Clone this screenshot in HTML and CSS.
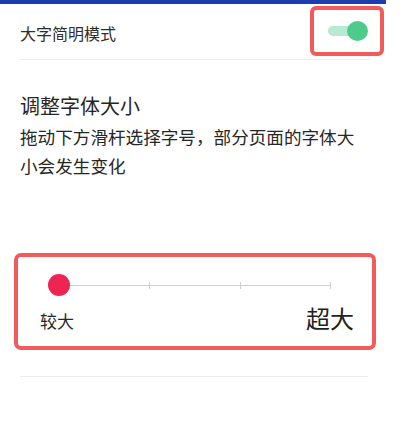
FILE: index.html
```html
<!DOCTYPE html>
<html lang="zh">
<head>
<meta charset="utf-8">
<link rel="stylesheet" href="styles.css">
</head>
<body>
<div class="topbar"></div>
<div class="row">
  <span class="row-title">大字简明模式</span>
  <div class="mark toggle-mark">
    <div class="toggle">
      <div class="toggle-track"></div>
      <div class="toggle-knob"></div>
    </div>
  </div>
</div>
<div class="section">
  <h2 class="heading">调整字体大小</h2>
  <p class="desc">拖动下方滑杆选择字号，部分页面的字体大小会发生变化</p>
</div>
<div class="mark slider-mark">
  <div class="slider">
    <div class="ticks">
      <span class="tick"></span><span class="tick"></span><span class="tick"></span><span class="tick"></span>
    </div>
    <div class="slider-knob"></div>
  </div>
  <div class="labels">
    <span class="label-small">较大</span>
    <span class="label-large">超大</span>
  </div>
</div>
<div class="bottom-line"></div>
</body>
</html>
```
FILE: styles.css
```css
html, body {
  margin: 0;
  padding: 0;
  background: #ffffff;
}
body {
  width: 400px;
  height: 439px;
  overflow: hidden;
  font-family: "Noto Sans CJK SC", "Noto Sans", sans-serif;
  color: #262626;
}
.topbar {
  width: 386px;
  height: 4px;
  background: #1c3db0;
}
.row {
  display: flex;
  align-items: center;
  justify-content: space-between;
  height: 55px;
  margin: 0 30px 0 20px;
  border-bottom: 1px solid #ececec;
}
.row-title {
  font-size: 16px;
  line-height: 20px;
  padding-top: 3px;
  color: #2e2e2e;
}
.mark {
  border: 4px solid #f35a5a;
  border-radius: 6px;
  box-sizing: border-box;
}
.toggle-mark {
  width: 74px;
  height: 50px;
  margin-right: -14px;
  margin-top: -2px;
  display: flex;
  align-items: center;
  justify-content: center;
  background: #fff;
}
.toggle {
  position: relative;
  width: 40px;
  height: 20px;
  margin-left: 2px;
}
.toggle-track {
  position: absolute;
  left: 0;
  top: 5px;
  width: 32px;
  height: 10px;
  border-radius: 5px;
  background: #b7ead0;
}
.toggle-knob {
  position: absolute;
  right: 0;
  top: 0;
  width: 21px;
  height: 20px;
  border-radius: 50%;
  background: #4ecb8c;
}
.section {
  padding: 32px 20px 0 20px;
}
.heading {
  margin: 0;
  font-size: 20px;
  line-height: 28px;
  font-weight: normal;
  color: #262626;
}
.desc {
  margin: 3px 0 0 0;
  font-size: 17.6px;
  line-height: 28.5px;
  color: #262626;
  width: 350px;
}
.slider-mark {
  width: 362px;
  height: 97px;
  margin: 73px 0 0 14px;
  border-radius: 7px;
  padding-top: 17px;
}
.slider {
  position: relative;
  margin-left: 41px;
  width: 272px;
  height: 22px;
}
.ticks {
  position: absolute;
  left: 0;
  right: 0;
  top: 11px;
  height: 1px;
  background: #cfcfcf;
  display: flex;
  justify-content: space-between;
  align-items: center;
}
.tick {
  width: 1px;
  height: 7px;
  background: #cfcfcf;
}
.slider-knob {
  position: absolute;
  left: -11px;
  top: 0;
  width: 22px;
  height: 22px;
  border-radius: 50%;
  background: #ee2553;
}
.labels {
  display: flex;
  justify-content: space-between;
  align-items: baseline;
  margin-top: 10px;
  padding: 0 18px 0 22px;
}
.label-small {
  font-size: 17px;
  line-height: 24px;
  color: #262626;
}
.label-large {
  font-size: 24px;
  line-height: 24px;
  color: #222;
}
.bottom-line {
  margin: 26px 0 0 20px;
  width: 348px;
  height: 1px;
  background: #ececec;
}
```
